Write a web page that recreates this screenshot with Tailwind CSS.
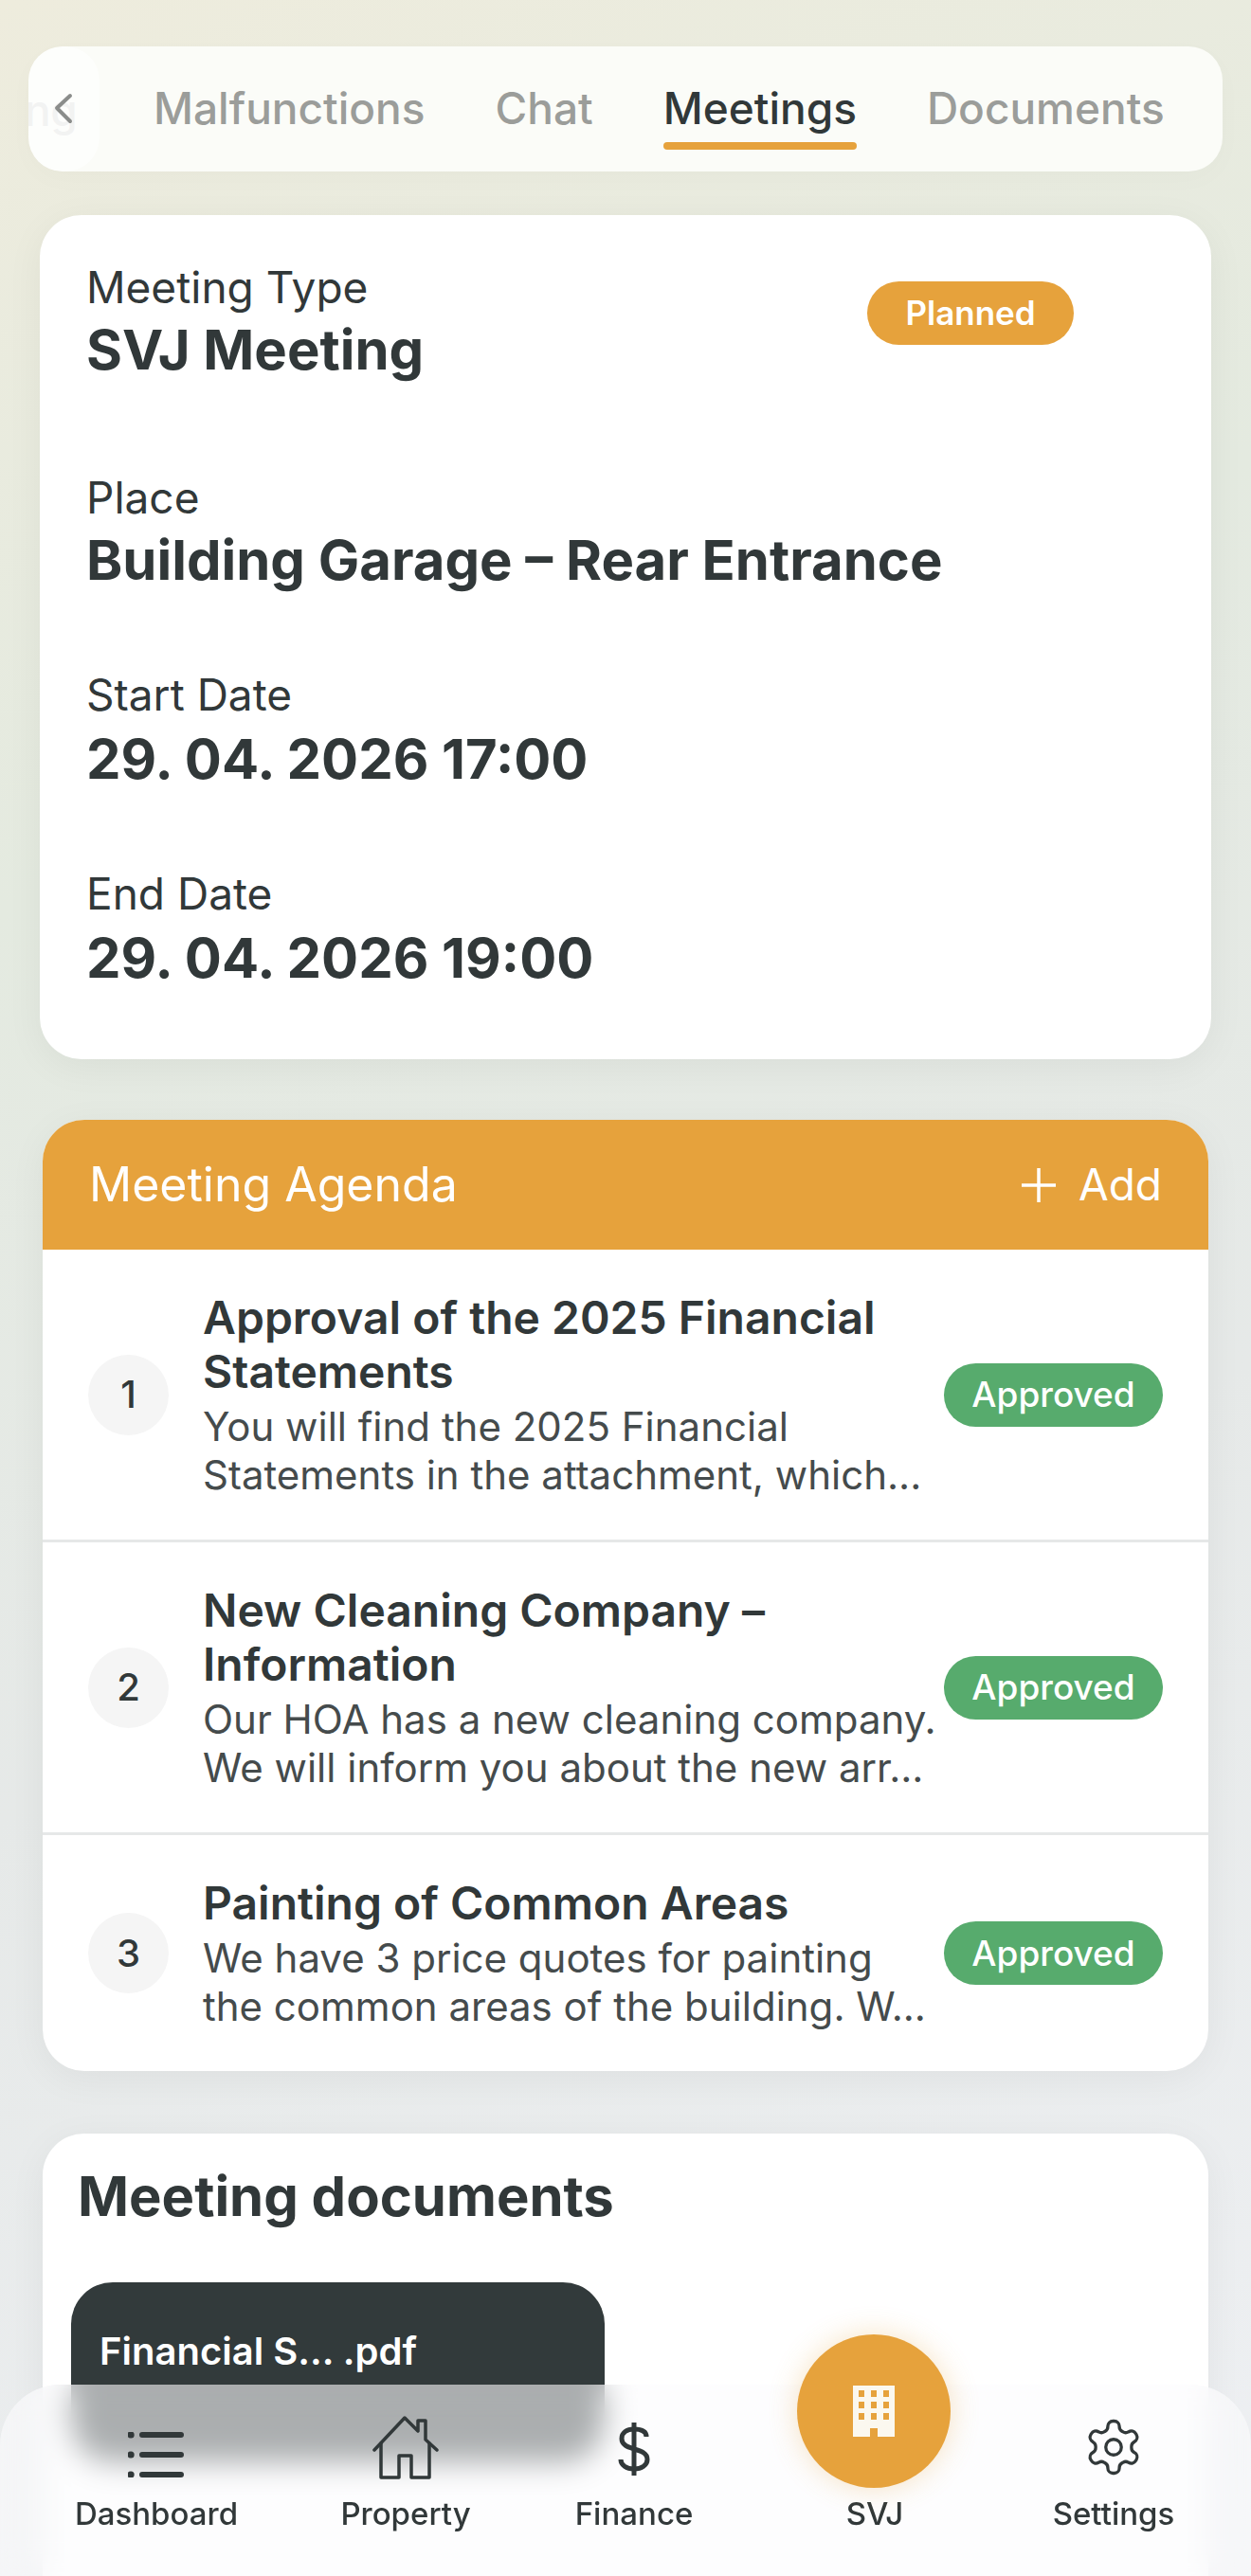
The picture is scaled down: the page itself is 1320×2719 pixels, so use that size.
<!doctype html>
<html>
<head>
<meta charset="utf-8">
<script src="https://cdn.jsdelivr.net/npm/@tailwindcss/browser@4"></script>
</head>
<body class="m-0">
<div class="relative w-[1320px] h-[2719px] overflow-hidden font-['Inter',sans-serif] text-[#313839] bg-[linear-gradient(160deg,#eeecdd_0%,#e4eae0_30%,#e6e9e8_60%,#eef0f3_100%)]">

  <!-- tabs -->
  <div class="pt-[49px] px-[30px]">
    <div class="relative h-[132px] rounded-[36px] bg-[#fbfcf8] overflow-hidden shadow-[0_8px_30px_rgba(0,0,0,0.02)]">
      <div class="absolute left-0 top-0 h-full flex items-center text-[46px] leading-none font-medium tracking-[-0.5px] text-[#9b9d9a]">
        <span class="absolute left-[-4px] top-[44px] text-[#dfe0df] whitespace-nowrap">ng</span>
      </div>
      <div class="absolute left-0 top-0 w-[75px] h-full rounded-[36px] bg-white/60 flex items-center justify-center">
        <svg width="20" height="34" viewBox="0 0 20 34" fill="none" class="ml-[-2px]"><path d="M17 3 L3 16 L17 30" stroke="#8b8d8b" stroke-width="4" stroke-linecap="round" stroke-linejoin="round"/></svg>
      </div>
      <div class="absolute left-[132px] top-0 h-full flex gap-[74px] text-[46px] leading-none font-medium items-center pb-[2px] whitespace-nowrap text-[#9b9d9a]">
        <span>Malfunctions</span>
        <span>Chat</span>
        <span class="relative text-[#313839]">Meetings<span class="absolute left-0 right-0 top-[59px] h-[8px] rounded-full bg-[#e6a23c]"></span></span>
        <span>Documents</span>
      </div>
    </div>
  </div>

  <!-- meeting info -->
  <div class="mt-[46px] mx-[42px] h-[891px] rounded-[44px] bg-white shadow-[0_8px_40px_rgba(0,0,0,0.05)] relative pl-[49px] pt-[48px]">
    <span class="absolute left-[873px] top-[70px] h-[67px] w-[218px] rounded-full bg-[#e6a23c] text-white text-[35px] font-semibold flex items-center justify-center">Planned</span>
    <div class="text-[46px] leading-[56px]">Meeting Type</div>
    <div class="text-[58px] leading-[72px] font-bold mt-[2px]">SVJ Meeting</div>
    <div class="text-[46px] leading-[56px] mt-[92px]">Place</div>
    <div class="text-[58px] leading-[72px] font-bold mt-[2px]">Building Garage – Rear Entrance</div>
    <div class="text-[46px] leading-[56px] mt-[78px]">Start Date</div>
    <div class="text-[58px] leading-[72px] font-bold mt-[4px]">29. 04. 2026 17:00</div>
    <div class="text-[46px] leading-[56px] mt-[78px]">End Date</div>
    <div class="text-[58px] leading-[72px] font-bold mt-[4px]">29. 04. 2026 19:00</div>
  </div>

  <!-- agenda -->
  <div class="mt-[64px] mx-[45px] h-[1004px] rounded-[44px] bg-white overflow-hidden shadow-[0_8px_40px_rgba(0,0,0,0.05)]">
    <div class="h-[137px] bg-[#e6a23c] text-white flex items-center justify-between pl-[49px] pr-[49px] text-[50px]">
      <span>Meeting Agenda</span>
      <span class="flex items-center gap-[24px] text-[46px]">
        <svg width="36" height="36" viewBox="0 0 36 36" fill="none"><path d="M18 0V36M0 18H36" stroke="#fff" stroke-width="3.5"/></svg>
        Add
      </span>
    </div>

    <div class="h-[309px] border-b-[3px] border-[#e6e8e8] flex items-center pl-[48px] pr-[48px]">
      <div class="w-[85px] h-[85px] shrink-0 rounded-full bg-[#f5f5f5] flex items-center justify-center text-[40px] font-medium">1</div>
      <div class="w-[780px] ml-[36px] shrink-0">
        <div class="text-[48px] leading-[57px] font-semibold">Approval of the 2025 Financial Statements</div>
        <div class="text-[42px] leading-[51px] mt-[4px] text-[#454b4c] whitespace-nowrap">You will find the 2025 Financial<br>Statements in the attachment, which...</div>
      </div>
      <span class="ml-auto w-[231px] h-[67px] shrink-0 rounded-full bg-[#57ab6d] text-white text-[37px] font-medium flex items-center justify-center">Approved</span>
    </div>

    <div class="h-[309px] border-b-[3px] border-[#e6e8e8] flex items-center pl-[48px] pr-[48px]">
      <div class="w-[85px] h-[85px] shrink-0 rounded-full bg-[#f5f5f5] flex items-center justify-center text-[40px] font-medium">2</div>
      <div class="w-[780px] ml-[36px] shrink-0">
        <div class="text-[48px] leading-[57px] font-semibold">New Cleaning Company –<br>Information</div>
        <div class="text-[42px] leading-[51px] mt-[4px] text-[#454b4c] whitespace-nowrap">Our HOA has a new cleaning company.<br>We will inform you about the new arr...</div>
      </div>
      <span class="ml-auto w-[231px] h-[67px] shrink-0 rounded-full bg-[#57ab6d] text-white text-[37px] font-medium flex items-center justify-center">Approved</span>
    </div>

    <div class="h-[249px] flex items-center pl-[48px] pr-[48px]">
      <div class="w-[85px] h-[85px] shrink-0 rounded-full bg-[#f5f5f5] flex items-center justify-center text-[40px] font-medium">3</div>
      <div class="w-[780px] ml-[36px] shrink-0">
        <div class="text-[48px] leading-[57px] font-semibold">Painting of Common Areas</div>
        <div class="text-[42px] leading-[51px] mt-[4px] text-[#454b4c] whitespace-nowrap">We have 3 price quotes for painting<br>the common areas of the building. W...</div>
      </div>
      <span class="ml-auto w-[231px] h-[67px] shrink-0 rounded-full bg-[#57ab6d] text-white text-[37px] font-medium flex items-center justify-center">Approved</span>
    </div>
  </div>

  <!-- documents -->
  <div class="mt-[66px] mx-[45px] h-[600px] rounded-[44px] bg-white pl-[37px] pt-[30px] shadow-[0_8px_40px_rgba(0,0,0,0.05)]">
    <div class="text-[58px] leading-[72px] font-bold">Meeting documents</div>
    <div class="mt-[55px] ml-[-7px] w-[563px] h-[190px] rounded-[44px] bg-[#323a3b] text-white text-[40px] font-semibold pl-[30px] pt-[48px] leading-[50px]">Financial S... .pdf</div>
  </div>

  <!-- bottom nav -->
  <div class="absolute left-0 right-0 bottom-0 h-[202px] rounded-t-[64px] bg-[#fbfcfd]/60 backdrop-blur-[16px]">
    <div class="absolute left-[36px] w-[258px] top-[50px] flex flex-col items-center">
      <svg width="60" height="48" viewBox="0 0 60 48" fill="none" stroke="#313839" stroke-width="6" stroke-linecap="round"><path d="M15 3H56M15 24H56M15 45H56"/><path d="M3 3H3.2M3 24H3.2M3 45H3.2" stroke-width="7"/></svg>
    </div>
    <div class="absolute left-[290px] w-[276px] top-[33px] flex flex-col items-center">
      <svg width="70" height="68" viewBox="0 0 70 68" fill="none" stroke="#313839" stroke-width="3.5" stroke-linejoin="round" stroke-linecap="round"><path d="M2 36 L34 2 L48 16 V5 H56 V25 L68 36"/><path d="M9 29 V65 H28 V42 H41 V65 H60 V29"/></svg>
    </div>
    <div class="absolute left-[569px] w-[200px] top-[40px] flex flex-col items-center">
      <svg width="34" height="56" viewBox="0 0 34 56" fill="none" stroke="#313839" stroke-width="5" stroke-linecap="butt"><path d="M17 0V56"/><path d="M30 15 C30 9 24 7 17 7 C9 7 4 11 4 17 C4 24 11 26 17 28 C24 30 31 32 31 39 C31 45 25 49 17 49 C9 49 3 45 3 39"/></svg>
    </div>
    <div class="absolute left-[1075px] w-[200px] top-[33px] flex flex-col items-center">
      <svg width="66" height="66" viewBox="0 0 24 24" fill="none" stroke="#313839" stroke-width="1.2" stroke-linecap="round" stroke-linejoin="round"><path d="M12.22 2h-.44a2 2 0 0 0-2 2v.18a2 2 0 0 1-1 1.73l-.43.25a2 2 0 0 1-2 0l-.15-.08a2 2 0 0 0-2.73.73l-.22.38a2 2 0 0 0 .73 2.73l.15.1a2 2 0 0 1 1 1.72v.51a2 2 0 0 1-1 1.74l-.15.09a2 2 0 0 0-.73 2.73l.22.38a2 2 0 0 0 2.73.73l.15-.08a2 2 0 0 1 2 0l.43.25a2 2 0 0 1 1 1.73V20a2 2 0 0 0 2 2h.44a2 2 0 0 0 2-2v-.18a2 2 0 0 1 1-1.73l.43-.25a2 2 0 0 1 2 0l.15.08a2 2 0 0 0 2.73-.73l.22-.39a2 2 0 0 0-.73-2.73l-.15-.08a2 2 0 0 1-1-1.74v-.5a2 2 0 0 1 1-1.74l.15-.09a2 2 0 0 0 .73-2.73l-.22-.38a2 2 0 0 0-2.73-.73l-.15.08a2 2 0 0 1-2 0l-.43-.25a2 2 0 0 1-1-1.73V4a2 2 0 0 0-2-2z"/><circle cx="12" cy="12" r="3"/></svg>
    </div>
    <div class="absolute left-0 right-0 top-[115px] text-[33px] leading-[42px] font-medium text-[#313839]">
      <span class="absolute left-[36px] w-[258px] text-center">Dashboard</span>
      <span class="absolute left-[328px] w-[200px] text-center">Property</span>
      <span class="absolute left-[569px] w-[200px] text-center">Finance</span>
      <span class="absolute left-[823px] w-[200px] text-center">SVJ</span>
      <span class="absolute left-[1075px] w-[200px] text-center">Settings</span>
    </div>
  </div>

  <!-- SVJ fab -->
  <div class="absolute left-[841px] top-[2464px] w-[162px] h-[162px] rounded-full bg-[#e6a23c] shadow-[0_0_30px_rgba(230,162,60,0.3)] flex items-center justify-center">
    <svg width="44" height="54" viewBox="0 0 44 54" fill="#fbf8ef"><path fill-rule="evenodd" d="M0 0H44V54H26V45H18V54H0Z M6 5V12H12V5Z M19 5V12H25V5Z M32 5V12H38V5Z M6 17V24H12V17Z M19 17V24H25V17Z M32 17V24H38V17Z M6 29V36H12V29Z M19 29V36H25V29Z M32 29V36H38V29Z"/></svg>
  </div>
</div>
</body>
</html>
